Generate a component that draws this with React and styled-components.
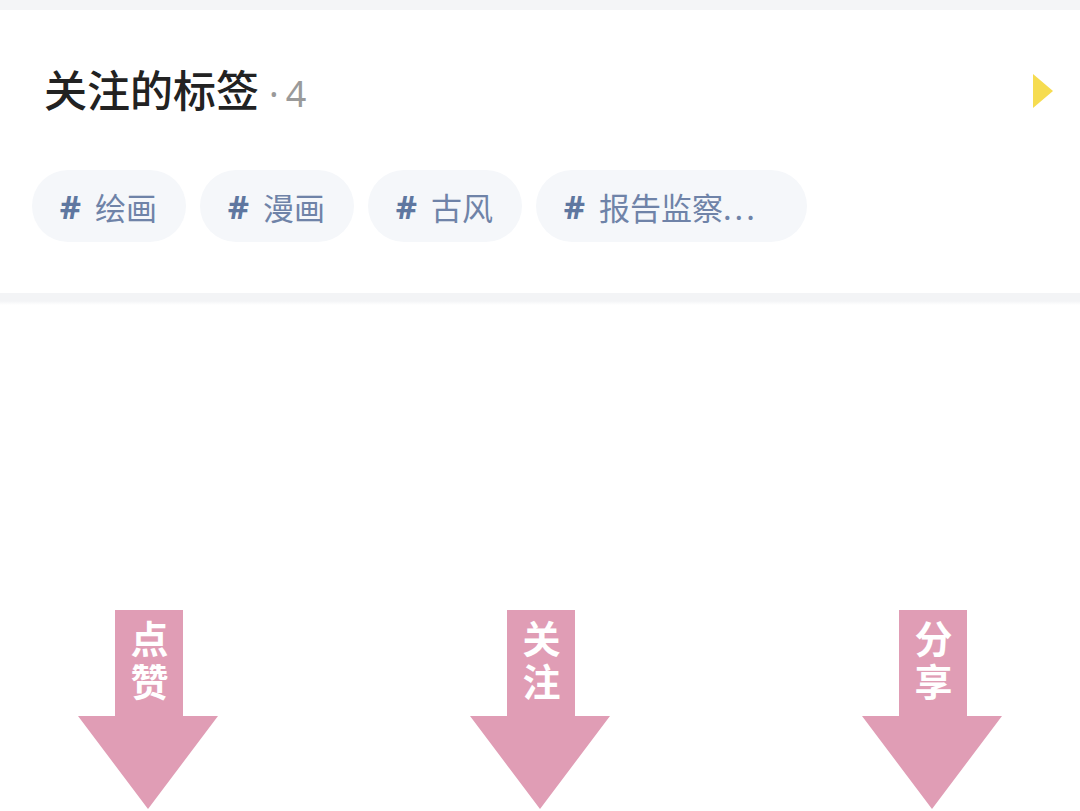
import React from "react";
import styled, { createGlobalStyle } from "styled-components";

const Global = createGlobalStyle`
  html, body { margin: 0; padding: 0; background: #ffffff; }
  body { font-family: "Noto Sans CJK SC", "Noto Sans", sans-serif; }
  * { box-sizing: border-box; }
`;

const Page = styled.div`
  width: 1080px;
  height: 811px;
  overflow: hidden;
  background: #ffffff;
  display: flex;
  flex-direction: column;
`;

const TopStrip = styled.div`
  height: 10px;
  background: #f4f5f7;
`;

const Card = styled.section`
  background: #ffffff;
  padding: 61px 27px 51px 32px;
  display: flex;
  flex-direction: column;
  gap: 59px;
`;

const TitleRow = styled.div`
  display: flex;
  align-items: center;
  justify-content: space-between;
  height: 40px;
  padding-left: 12px;
`;

const Title = styled.h2`
  margin: 0;
  font-size: 43px;
  line-height: 40px;
  font-weight: 500;
  color: #222222;
  display: flex;
  align-items: baseline;
`;

const Count = styled.span`
  font-size: 36px;
  font-weight: 400;
  color: #9a9a9a;
  margin-left: 10px;
  font-family: "Noto Sans", "Noto Sans CJK SC", sans-serif;
`;

const CountDot = styled.span`
  margin-right: 7px;
`;

const TagRow = styled.div`
  display: flex;
  gap: 14px;
`;

const Tag = styled.div`
  height: 72px;
  border-radius: 36px;
  background: #f5f7fa;
  padding: 0 ${p => p.$pr || 29}px 0 26px;
  display: flex;
  align-items: center;
  gap: 12px;
  color: #6f83a8;
  font-size: 31px;
`;

const Hash = styled.span`
  display: inline-block;
  width: 25px;
  text-align: center;
  font-weight: 700;
  color: #5f77a0;
  font-size: 33px;
  font-family: "Noto Sans", sans-serif;
`;

const TagText = styled.span``;

const Dots = styled.span`
  letter-spacing: 3px;
`;

const Separator = styled.div`
  height: 12px;
  background: linear-gradient(#f3f4f6 0, #f3f4f6 8px, #ffffff 12px);
`;

const ArrowRow = styled.div`
  display: flex;
  justify-content: space-between;
  padding: 0 78px 0 78px;
  margin-top: 305px;
`;

const ArrowBox = styled.div`
  position: relative;
  width: 140px;
  height: 200px;
`;

const ArrowLabel = styled.div`
  position: absolute;
  left: 37px;
  top: 10px;
  color: #ffffff;
  font-size: 38px;
  font-weight: 700;
  line-height: 68px;
  writing-mode: vertical-rl;
  text-orientation: upright;
  letter-spacing: 5px;
`;

const PinkArrow = ({ label }) => (
  <ArrowBox>
    <svg width="140" height="200" viewBox="0 0 140 200" style={{ position: "absolute", left: 0, top: 0 }}>
      <path d="M37 0 H105 V106 H140 L70 199 L0 106 H37 Z" fill="#e09db5" />
    </svg>
    <ArrowLabel>{label}</ArrowLabel>
  </ArrowBox>
);

const tags = [
  { t: "绘画" },
  { t: "漫画" },
  { t: "古风" },
  { t: "报告监察", more: true, pr: 49 },
];

export default function App() {
  return (
    <Page>
      <Global />
      <TopStrip />
      <Card>
        <TitleRow>
          <Title>
            关注的标签
            <Count>
              <CountDot>·</CountDot>4
            </Count>
          </Title>
          <svg width="20" height="34" viewBox="0 0 20 34">
            <path d="M0 0 L20 17 L0 34 Z" fill="#f6dc50" />
          </svg>
        </TitleRow>
        <TagRow>
          {tags.map((g, i) => (
            <Tag key={i} $pr={g.pr}>
              <Hash>#</Hash>
              <TagText>
                {g.t}
                {g.more && <Dots>...</Dots>}
              </TagText>
            </Tag>
          ))}
        </TagRow>
      </Card>
      <Separator />
      <ArrowRow>
        <PinkArrow label="点赞" />
        <PinkArrow label="关注" />
        <PinkArrow label="分享" />
      </ArrowRow>
    </Page>
  );
}
